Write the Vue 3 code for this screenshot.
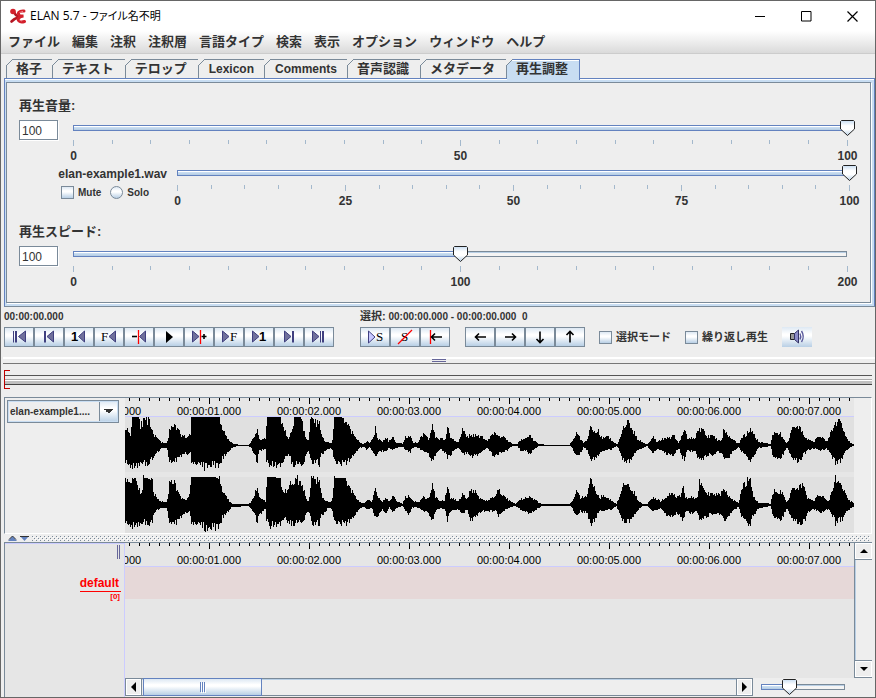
<script setup>
import { reactive, ref } from 'vue'

const menus = ['ファイル', '編集', '注釈', '注釈層', '言語タイプ', '検索', '表示', 'オプション', 'ウィンドウ', 'ヘルプ']

const tabs = [
  { name: '格子' }, { name: 'テキスト' }, { name: 'テロップ' },
  { name: 'Lexicon', latin: true }, { name: 'Comments', latin: true },
  { name: '音声認識' }, { name: 'メタデータ' }, { name: '再生調整' }
]
const activeTab = ref('再生調整')

const rows = reactive([
  { id: 'volume', title: '再生音量:', value: 100, max: 100, steps: 20, major: 10, labels: [0, 50, 100] },
  { id: 'track', file: 'elan-example1.wav', value: 100, max: 100, steps: 20, major: 5, labels: [0, 25, 50, 75, 100] },
  { id: 'rate', title: '再生スピード:', value: 100, max: 200, steps: 20, major: 10, labels: [0, 100, 200] }
])
const zoom = ref(33)
const mute = ref(false)
const solo = ref('')
const selectionMode = ref(false)
const loopMode = ref(false)
const source = ref('elan-example1....')

const triL = (tip, edge) => ({ t: 'tri', d: `M${tip} 9.5L${edge} 4V15Z` })
const triR = (edge, tip) => ({ t: 'tri', d: `M${tip} 9.5L${edge} 4V15Z` })
const bar = (x, w) => ({ t: 'bar', d: `M${x} 4h${w}v11.5h${-w}z` })
const red = (d) => ({ t: 'red', d })
const line = (d) => ({ t: 'line', d })
const glyph = (x, s, c) => ({ t: 'text', x, s, c })

const playback = [
  { name: 'Go to begin', parts: [bar(9, 1), bar(11, 2), triL(14.5, 21.5)] },
  { name: 'Previous scroll view', parts: [bar(10, 2), triL(13, 19.5)] },
  { name: 'One second back', parts: [glyph(7, '1', 'num'), triL(14.5, 20.5)] },
  { name: 'Previous frame', parts: [glyph(7, 'F', 'letter'), triL(15, 21.5)] },
  { name: 'Pixel left', parts: [line('M8 9.5h5'), red('M14.5 3v14'), triL(15.5, 21.5)] },
  { name: 'Play', parts: [{ t: 'solid', d: 'M19 10L12 4V16Z' }] },
  { name: 'Pixel right', parts: [triR(8.5, 15), red('M16.5 3v14'), line('M17.5 9.5h5M20 7v5')] },
  { name: 'Next frame', parts: [triR(8.5, 15), glyph(16, 'F', 'letter')] },
  { name: 'One second forward', parts: [triR(8.5, 15), glyph(15, '1', 'num')] },
  { name: 'Next scroll view', parts: [triR(10.5, 17), bar(18, 2)] },
  { name: 'Go to end', parts: [triR(8.5, 15), bar(16, 1), bar(18, 2)] }
]
const selectionButtons = [
  { name: 'Play selection', parts: [{ t: 'pale', d: 'M15 10L8.5 4V16Z' }, glyph(16, 'S', 'letter')] },
  { name: 'Clear selection', parts: [glyph(11, 'S', 'letter'), red('M8 17L22 3')] },
  { name: 'Toggle crosshair', parts: [red('M10.5 3v14'), line('M22 10H12M15 6.5L11.5 10L15 13.5')] }
]
const moveButtons = [
  { name: 'Previous annotation', parts: [line('M21 10H11M14 6.5L10.5 10L14 13.5')] },
  { name: 'Next annotation', parts: [line('M10 10H20M17 6.5L20.5 10L17 13.5')] },
  { name: 'Annotation below', parts: [line('M15 4.5V15M11.5 12L15 15.5L18.5 12')] },
  { name: 'Annotation above', parts: [line('M15 15.5V5M11.5 8L15 4.5L18.5 8')] }
]
const groups = [selectionButtons, moveButtons]

/* Time ruler: 100 px per second, the view starts at 0.16 s */
const ORIGIN = -16
const SIDES = 147
const seconds = Math.max(1, Math.ceil((window.innerWidth - SIDES - ORIGIN) / 100))
const ticks = Array.from({ length: seconds * 10 }, (_, i) => ({ x: ORIGIN + i * 10, major: i % 10 === 0 }))
const stamps = Array.from({ length: seconds }, (_, i) => ({ x: ORIGIN + i * 100, s: `00:00:${String(i).padStart(2, '0')}.000` }))

/* Envelope points "x,top,bottom" in thirds of a pixel */
const channels = [
  {
    center: 28,
    blocks: [
      { shift: -30, mid: 150, pts: '30,95,205 45,120,213 50,66,215 70,66,210 75,90,205 85,80,205 100,80,205 110,110,190 125,130,170 140,143,160 155,142,158 162,110,195 172,95,205 185,100,190 200,125,180 222,122,175 227,122,175 228,66,205 264,66,208 266,66,225 269,66,210 312,66,208 320,100,190 335,130,175 350,145,157 370,149,153 400,149,153 410,135,165 420,120,185 425,95,200 432,135,165 450,130,165 454,66,205 495,66,208 505,100,195 520,135,175 530,100,205 537,66,210 557,66,212 565,110,200 580,140,165 585,75,200 605,85,200 612,85,205 617,120,180 630,140,165 650,145,160 658,66,203 678,66,205 690,75,203 705,105,195 720,130,170 740,146,155 750,145,158 755,135,165 762,145,155 775,125,175 780,100,190 787,130,170 800,138,168 815,130,165 820,140,158 832,125,165 840,143,160 862,146,155 870,128,165 885,125,170 892,143,158 910,143,158 918,120,165 930,120,170 940,135,175 952,90,200 960,130,180 975,130,160 990,135,175 995,95,185 1005,125,180 1020,138,162 1030,142,158 1040,105,175 1055,125,175 1075,120,185 1100,125,170 1115,138,158' },
      { shift: 1065, mid: 149, pts: '30,125,170 42,112,185 55,125,175 65,120,172 80,135,165 95,145,152 110,146,152 120,135,165 135,130,165 150,120,178 160,135,160 175,146,153 195,148,151 268,148,150 275,135,158 290,110,182 300,130,175 310,142,155 322,130,165 328,92,190 345,110,190 352,105,180 365,130,168 380,120,165 395,135,160 410,147,152 420,125,175 430,98,195 442,80,200 455,98,190 470,130,165 485,140,158 500,148,152 510,135,165 518,120,175 530,140,160 555,125,175 570,130,175 578,115,180 595,145,158 605,120,185 613,95,190 620,128,165 645,130,170 652,100,190 662,100,195 680,125,178 700,120,180 710,135,170 725,135,175 730,100,190 745,125,185 755,130,170 775,145,155 785,125,170 800,115,185 815,100,195 822,120,175 835,140,158 870,146,152 878,115,185 895,110,190 905,125,180 920,145,155 935,100,190 952,90,198 965,110,185 980,130,165 1000,140,160 1018,120,165 1040,138,160 1050,115,175 1065,90,200 1075,68,203 1085,90,190 1095,125,170 1110,142,155 1122,148,151' }
    ]
  },
  {
    center: 88,
    blocks: [
      { shift: -30, mid: 332, pts: '30,250,388 37,265,392 50,255,395 60,250,392 78,300,388 85,250,385 110,255,388 113,290,360 125,315,345 140,322,342 155,322,342 163,265,385 178,270,388 190,300,375 205,318,360 222,305,350 228,249,388 264,249,390 268,249,405 270,249,412 272,249,398 300,249,398 314,255,388 320,290,370 340,318,350 350,328,338 400,330,335 415,310,355 425,275,380 432,310,360 450,320,345 454,249,385 464,249,385 466,249,412 468,249,388 495,250,388 502,295,370 515,290,378 525,270,385 540,250,388 555,265,388 565,290,375 580,325,350 588,260,385 598,252,390 612,265,385 620,310,360 640,325,340 650,320,345 658,250,385 690,250,388 697,275,385 712,295,370 725,318,350 745,328,336 755,315,345 770,322,342 778,280,372 790,310,360 800,320,345 812,312,355 822,322,340 832,305,352 845,322,340 862,328,335 870,308,350 880,305,360 890,320,340 912,325,340 920,308,350 935,315,350 945,300,365 952,268,382 960,310,350 975,320,340 988,320,345 995,278,378 1005,310,350 1030,320,345 1040,300,360 1055,315,345 1065,288,375 1080,290,370 1090,310,355 1110,318,350' },
      { shift: 1065, mid: 332, pts: '30,315,350 45,305,350 55,285,365 70,305,350 85,318,340 105,328,335 120,315,345 150,308,358 165,318,345 185,329,334 268,330,332 275,318,342 290,285,365 300,310,350 320,305,355 325,265,375 332,250,388 345,285,375 355,310,350 370,305,350 395,318,345 408,328,335 420,300,365 433,265,385 445,278,380 458,290,370 475,320,345 485,328,335 500,330,334 510,315,345 520,308,350 540,320,342 555,310,360 575,295,365 590,310,355 602,305,365 608,265,380 615,310,350 640,310,358 650,315,350 658,250,385 668,290,370 690,300,360 720,300,360 735,285,380 742,305,365 760,318,345 775,325,338 785,280,370 800,262,385 810,250,385 820,310,360 835,325,342 870,328,335 880,290,370 905,295,372 920,325,340 935,285,375 955,280,385 972,268,385 980,310,355 1000,320,345 1018,300,355 1045,320,345 1060,280,370 1065,255,385 1080,268,375 1088,285,375 1100,312,350 1122,328,335' }
    ]
  }
]

function wavePath({ center, blocks }) {
  const pts = blocks.flatMap(b => b.pts.split(' ').map(p => {
    const [x, top, bottom] = p.split(',').map(Number)
    return { x: (x + b.shift) / 3, up: (b.mid - top) / 3, down: (bottom - b.mid) / 3 }
  }))
  let seed = 11
  const noise = () => (seed = (seed * 16807) % 2147483647) / 2147483647
  let d = ''
  let k = 0
  for (let x = 0; x < 729; x++) {
    while (k < pts.length - 2 && pts[k + 1].x < x) k++
    const a = pts[k], b = pts[k + 1]
    const f = Math.min(1, Math.max(0, (x - a.x) / (b.x - a.x || 1)))
    const shape = (p, r) => {
      const v = a[p] + (b[p] - a[p]) * f
      return v > 26 || v < 2 ? v : v * (0.8 + 0.4 * r)
    }
    const up = Math.round(shape('up', noise()))
    const down = Math.round(shape('down', noise()))
    d += `M${x} ${center - up}h1v${up + Math.max(1, down)}h-1z`
  }
  return d
}
const waves = channels.map(wavePath)
</script>

<template>
  <div class="window">
    <header class="titlebar">
      <svg class="logo" width="17" height="17" viewBox="0 0 17 17">
        <path d="M4.500 3.500C6 7 8 8 10 9C7 10 5 11 2.500 13.500" fill="none" stroke="#b31622" stroke-width="2.600" stroke-linecap="round" />
        <path d="M15 3C10 2.500 8 5.500 10.500 7.500C12 8.500 14 8 14.500 8C10 8.500 8 11 10 13C11.500 14.500 14 14 15.500 13.500" fill="none" stroke="#d3202c" stroke-width="3" stroke-linecap="round" />
        <circle cx="4" cy="3.500" r="2.800" fill="#d3202c" />
        <path d="M10.500 4.500L14 3.500M10.500 12L13 13" stroke="#f08a90" />
      </svg>
      <h1>ELAN 5.7 - <span>ファイル名不明</span></h1>
      <div class="controls">
        <button aria-label="Minimize"><svg width="11" height="11"><path d="M0 5.500h10" stroke="#000" /></svg></button>
        <button aria-label="Maximize"><svg width="11" height="11"><path d="M.5 .5h9.500v9.500H.5z" fill="none" stroke="#000" /></svg></button>
        <button aria-label="Close"><svg width="11" height="11"><path d="M.5 .5l10 10M10.500 .5l-10 10" stroke="#000" stroke-width="1.200" /></svg></button>
      </div>
    </header>

    <nav class="menubar">
      <button v-for="m in menus" :key="m">{{ m }}</button>
    </nav>

    <div class="tabs" role="tablist">
      <button
        v-for="t in tabs" :key="t.name" role="tab"
        :class="['tab', { latin: t.latin, active: t.name === activeTab }]"
        :aria-selected="t.name === activeTab" @click="activeTab = t.name"
      >{{ t.name }}</button>
    </div>

    <section class="panel">
      <div class="panel-body">
        <div v-for="r in rows" :key="r.id" :class="['setting', r.id]">
          <label v-if="r.title" class="setting-title" :for="r.id">{{ r.title }}</label>
          <div class="setting-row">
            <input v-if="r.title" :id="r.id" v-model="r.value" class="number" type="text">
            <div v-else class="track-info">
              <label class="file" for="track-range">{{ r.file }}</label>
              <div class="options">
                <label><input v-model="mute" class="box" type="checkbox">Mute</label>
                <label><input v-model="solo" class="box round" type="radio" value="solo">Solo</label>
              </div>
            </div>
            <div class="slider">
              <div class="groove">
                <div class="rail"><div class="fill" :style="{ width: r.value / r.max * 100 + '%' }"></div></div>
                <svg class="knob" :style="{ left: r.value / r.max * 100 + '%' }" width="15" height="16" viewBox="0 0 15 16">
                  <path d="M1.500 .5H13.500L14.500 1.500V9L7.500 15.500L.5 9V1.500Z" fill="url(#knobFill)" stroke="#222" />
                </svg>
                <input :id="r.id + '-range'" v-model.number="r.value" class="range" type="range" min="0" :max="r.max" :aria-label="r.title || r.file">
              </div>
              <div class="scale">
                <i v-for="n in r.steps + 1" :key="n" :class="{ major: (n - 1) % r.major === 0 }"></i>
              </div>
              <div class="scale-labels">
                <span v-for="l in r.labels" :key="l"><b>{{ l }}</b></span>
              </div>
            </div>
          </div>
        </div>
      </div>
    </section>

    <section class="transport">
      <div class="transport-col">
        <div class="status">00:00:00.000</div>
        <div class="buttons">
          <button v-for="b in playback" :key="b.name" class="tool" :aria-label="b.name">
            <svg width="28" height="18" viewBox="1 1 28 18">
              <template v-for="(p, i) in b.parts" :key="i">
                <text v-if="p.t === 'text'" :x="p.x" y="14" :class="p.c">{{ p.s }}</text>
                <path v-else :d="p.d" :class="'p-' + p.t" />
              </template>
            </svg>
          </button>
        </div>
      </div>
      <div class="transport-col">
        <div class="status"><span>選択:</span> 00:00:00.000 - 00:00:00.000 &nbsp;0</div>
        <div class="tool-row">
          <div v-for="(g, gi) in groups" :key="gi" class="buttons">
            <button v-for="b in g" :key="b.name" class="tool" :aria-label="b.name">
              <svg width="28" height="18" viewBox="1 1 28 18">
                <template v-for="(p, i) in b.parts" :key="i">
                  <text v-if="p.t === 'text'" :x="p.x" y="14" :class="p.c">{{ p.s }}</text>
                  <path v-else :d="p.d" :class="'p-' + p.t" />
                </template>
              </svg>
            </button>
          </div>
          <label class="mode"><input v-model="selectionMode" class="box" type="checkbox">選択モード</label>
          <label class="mode"><input v-model="loopMode" class="box" type="checkbox">繰り返し再生</label>
          <button class="tool flat" aria-label="Volume">
            <svg width="30" height="20" viewBox="0 0 30 20">
              <path d="M8.500 6.500h4v6h-4z" fill="#999" stroke="#222" />
              <path d="M12.500 6.500L16.500 3V16L12.500 12.500Z" fill="#8c8cc8" stroke="#333366" />
              <path d="M18 6.500Q19.500 9.500 18 12.500M19.500 4Q23 9.500 19.500 15" fill="none" stroke="#5a5a9c" stroke-width="1.400" />
            </svg>
          </button>
        </div>
      </div>
    </section>

    <div class="splitter"><i></i></div>
    <div class="overview"><div class="lines"></div><i class="bracket"></i></div>

    <section class="signal">
      <div class="signal-side">
        <select v-model="source" class="combo" aria-label="Signal source"><option>elan-example1....</option></select>
      </div>
      <div class="signal-view">
        <svg class="ruler" width="100%" height="18">
          <path v-for="t in ticks" :key="t.x" :d="`M${t.x + 0.5} 0v${t.major ? 6 : 3}`" />
          <text v-for="s in stamps" :key="s.s" :x="s.x" y="17">{{ s.s }}</text>
        </svg>
        <svg class="wave" width="100%" height="116" viewBox="0 0 729 116" preserveAspectRatio="none">
          <rect y="55" width="729" height="5" fill="#e6e6e6" />
          <path v-for="(w, i) in waves" :key="i" :d="w" />
        </svg>
      </div>
      <div class="signal-end"></div>
    </section>

    <div class="divider">
      <button aria-label="Collapse up"><svg width="9" height="5"><path d="M0 5L4.500 0L9 5Z" fill="#6382bf" /><path d="M1 3.500L4.500 0L8 3.500" fill="none" stroke="#333" /></svg></button>
      <button aria-label="Collapse down"><svg width="9" height="5"><path d="M0 0L4.500 5L9 0Z" fill="#6382bf" /><path d="M0 .5h9" stroke="#333" /></svg></button>
      <svg class="dots" height="5" aria-hidden="true">
        <defs><pattern id="bumps" width="4" height="4" patternUnits="userSpaceOnUse">
          <rect width="1" height="1" fill="#7a8a99" /><rect x="2" y="2" width="1" height="1" fill="#7a8a99" />
          <rect x="1" y="1" width="1" height="1" fill="#fff" /><rect x="3" y="3" width="1" height="1" fill="#fff" />
        </pattern></defs>
        <rect width="100%" height="5" fill="url(#bumps)" />
      </svg>
    </div>

    <section class="timeline">
      <aside class="tiers">
        <div class="grip"><i></i></div>
        <div class="tier"><a href="#default">default</a><small>[0]</small></div>
      </aside>
      <div class="timeline-main">
        <div class="timeline-top">
          <div class="canvas">
            <svg class="ruler" width="100%" height="23">
              <path v-for="t in ticks" :key="t.x" :d="`M${t.x + 0.5} 0v${t.major ? 6 : 3}`" />
              <text v-for="s in stamps" :key="s.s" :x="s.x" y="21">{{ s.s }}</text>
            </svg>
            <div class="band"></div>
          </div>
          <div class="vscroll">
            <button aria-label="Scroll up"><svg width="8" height="4"><path d="M0 4L4 0L8 4Z" /></svg></button>
            <button aria-label="Scroll down"><svg width="8" height="4"><path d="M0 0L4 4L8 0Z" /></svg></button>
          </div>
        </div>
        <div class="timeline-bottom">
          <div class="hscroll">
            <button aria-label="Scroll left"><svg width="5" height="10"><path d="M5 0L0 5L5 10Z" /></svg></button>
            <div class="lane"><div class="thumb"><i></i><i></i><i></i></div></div>
            <button aria-label="Scroll right"><svg width="5" height="10"><path d="M0 0L5 5L0 10Z" /></svg></button>
          </div>
          <div class="zoom">
            <div class="groove">
              <div class="rail"><div class="fill" :style="{ width: zoom + '%' }"></div></div>
              <svg class="knob" :style="{ left: zoom + '%' }" width="15" height="16" viewBox="0 0 15 16">
                <defs><linearGradient id="knobFill" x2="0" y2="1">
                  <stop offset="0" stop-color="#c8ddf2" /><stop offset=".35" stop-color="#fff" />
                  <stop offset=".6" stop-color="#fff" /><stop offset="1" stop-color="#b8cfe5" />
                </linearGradient></defs>
                <path d="M1.500 .5H13.500L14.500 1.500V9L7.500 15.500L.5 9V1.500Z" fill="url(#knobFill)" stroke="#222" />
              </svg>
              <input v-model.number="zoom" class="range" type="range" min="0" max="100" aria-label="Zoom">
            </div>
          </div>
        </div>
      </div>
    </section>
  </div>
</template>

<style>
body { margin: 0; }
</style>

<style scoped>
* { box-sizing: border-box; }
.window {
  --edge: #7a8a99;
  --blue: #6382bf;
  --soft: #c8ddf2;
  --face: #eeeeee;
  --steel: linear-gradient(#dde8f3, #fff 35%, #fff 45%, #b8cfe5);
  display: flex;
  flex-direction: column;
  min-height: 100vh;
  border: 1px solid #666;
  background: var(--face);
  color: #333;
  font: bold 12px/16px "Liberation Sans", "Noto Sans CJK JP", sans-serif;
  white-space: nowrap;
}
button { padding: 0; border: 0; background: none; color: inherit; font: inherit; }
svg { display: block; }

.titlebar { display: flex; align-items: center; height: 30px; padding-left: 8px; background: #fff; }
.titlebar h1 {
  flex: 1; margin: 0 0 0 4px; color: #000;
  font: 12px/16px "Open Sans", "Noto Sans CJK JP", sans-serif;
}
.titlebar span { font-size: 11px; font-feature-settings: "palt"; }
.controls { display: flex; }
.controls button { display: grid; place-items: center; width: 46px; height: 28px; }

.menubar {
  display: flex; gap: 12px; height: 23px; padding-left: 7px;
  border-bottom: 1px solid #ccc; background: linear-gradient(#fff, #dadada);
  font-size: 13px;
}
.menubar button { line-height: 20px; }

.tabs { display: flex; margin: 5px 0 0 5px; position: relative; }
.tab {
  position: relative; height: 19px; padding: 0 11px 0 9px;
  border: solid var(--edge); border-width: 1px 1px 0 0;
  background: var(--face); font-size: 13px; line-height: 18px;
}
.tab:first-child { padding-right: 10px; border-left-width: 1px; }
.tab.latin { padding: 0 10px; font-size: 12px; }
.tab::before {
  content: ""; position: absolute; left: -1px; top: -1px; width: 7px; height: 7px;
  background: linear-gradient(135deg, var(--face) 0 45%, var(--edge) 45% 55%, transparent 55%);
}
.tab.active { height: 21px; margin-bottom: -2px; padding-bottom: 2px; border-color: var(--blue); background: var(--soft); box-shadow: inset 0 1px #fff; }

.panel {
  margin: 0 0 0 3px; border: 1px solid var(--blue); border-bottom-color: var(--edge);
  padding: 3px 3px 3px 1px; background: linear-gradient(#fff 0 1px, var(--soft) 1px);
}
.panel-body { padding: 13px 0 11px; border: 1px solid var(--edge); background: var(--face); box-shadow: 1px 1px #fff; }
.setting-title { display: block; margin: 0 0 4px 12px; font-size: 13px; line-height: 20px; }
.setting.rate { margin-top: 12px; }
.setting-row { display: flex; height: 45px; padding: 0 22px 0 12px; }
.track .setting-row { padding-right: 20px; }
.number {
  width: 39px; height: 20px; margin-right: 15px; padding: 1px 2px 0;
  border: 1px solid var(--edge); background: #fff; box-shadow: 1px 1px #fff;
  color: #333; font: 12px/16px "Liberation Sans", sans-serif;
}
.track-info { width: 148px; margin-right: 10px; text-align: right; }
.file { display: block; line-height: 18px; }
.options { display: flex; gap: 9px; margin: 3px 0 0 42px; font-size: 10px; line-height: 13px; }
.options label, .mode { display: flex; align-items: center; gap: 4px; }
.box { appearance: none; width: 13px; height: 13px; margin: 0; border: 1px solid var(--edge); background: var(--steel); }
.box:checked { background: var(--blue); }
.round { border-radius: 50%; }

.slider { flex: 1; }
.groove { position: relative; height: 16px; margin-right: 1px; padding-top: 5px; }
.rail { height: 6px; border: 1px solid var(--edge); background: linear-gradient(#b8cfe5 0 1px, #f4f4f4 1px); }
.fill { height: 6px; margin: -1px; border: 1px solid var(--blue); box-sizing: content-box; height: 4px; background: linear-gradient(#fff 0 1px, var(--soft) 1px 2px, #b8cfe5 3px); }
.knob { position: absolute; top: 0; margin-left: -7px; }
.range { position: absolute; inset: 0; width: 100%; height: 100%; margin: 0; opacity: 0; }
.scale { display: flex; justify-content: space-between; height: 6px; margin-top: 4px; }
.scale i { width: 1px; height: 4px; background: #a3b8cc; }
.scale i.major { height: 6px; }
.scale-labels { display: flex; justify-content: space-between; margin-top: 2px; }
.scale-labels span { display: flex; justify-content: center; width: 1px; }

.transport { display: flex; gap: 26px; padding: 3px 0 10px 3px; }
.status { height: 17px; font-size: 10px; line-height: 13px; }
.status span { font-size: 11px; }
.buttons, .tool-row { display: flex; }
.tool-row .buttons { margin-right: 15px; }
.tool-row .buttons + .buttons { margin-right: 14px; }
.tool { width: 30px; height: 20px; border: 1px solid var(--edge); background: var(--steel); }
.tool.flat { border: 0; }
.mode { margin-right: 14px; font-size: 11px; }
.p-tri { fill: #70709c; stroke: #404080; }
.p-bar { fill: #404080; }
.p-solid { fill: #000; }
.p-pale { fill: #c8c8ff; stroke: #404080; }
.p-red { fill: none; stroke: #f00; stroke-width: 1.3; }
.p-line { fill: none; stroke: #000; stroke-width: 1.6; }
.num { fill: #000; font: bold 13px "Liberation Sans", sans-serif; }
.letter { fill: #000; font: 13px "Liberation Serif", serif; }

.splitter { height: 7px; margin-left: 2px; border-top: 2px solid #fff; border-bottom: 1px solid #777; }
.splitter i { display: block; width: 14px; height: 3px; margin: 0 auto; border: solid #666699; border-width: 1px 0; }
.overview { position: relative; height: 33px; padding: 11px 3px 0 4px; }
.lines { height: 10px; background: linear-gradient(#555 0 1px, #eee 1px 4px, #aaa 4px 5px, #fff 5px 6px, #c0c0c0 6px 9px, #444 9px); }
.bracket { position: absolute; left: 3px; top: 6px; width: 6px; height: 19px; border: 1px solid #c00000; border-right: 0; }

.signal { display: flex; margin: 0 3px; border: 1px solid #fff; border-top-color: var(--edge); border-left-color: var(--edge); }
.signal-side { width: 120px; padding: 2px; }
.combo {
  appearance: none; display: block; width: 112px; height: 23px; padding: 0 2px;
  border: 1px solid var(--edge); border-radius: 0; color: #333;
  font: bold 10px/21px "Liberation Sans", sans-serif;
  background:
    linear-gradient(to bottom left, #333 50%, transparent 50%) 96px 8px / 5px 5px no-repeat,
    linear-gradient(to bottom right, #333 50%, transparent 50%) 101px 8px / 5px 5px no-repeat,
    linear-gradient(var(--edge), var(--edge)) 91px 0 / 1px 100% no-repeat,
    linear-gradient(#dde8f3, #fff 35%, #fff 45%, #b8cfe5) 92px 0 / 18px 100% no-repeat,
    var(--face);
  box-shadow: inset 0 0 0 1px var(--soft);
}
.signal-view { flex: 1; min-width: 0; }
.ruler { box-sizing: content-box; overflow: hidden; border-bottom: 1px solid #ccccff; background: #e6e6e6; }
.ruler path { stroke: #000; }
.ruler text { fill: #000; font: 11px "Liberation Sans", sans-serif; text-anchor: middle; }
.wave { background: #e0e0e0; shape-rendering: crispEdges; }
.signal-end { width: 17px; }

.divider { display: flex; align-items: center; gap: 3px; height: 8px; margin: 0 5px 0 7px; }
.dots { flex: 1; }

.timeline { display: flex; flex: 1; margin: 0 3px; border: solid var(--edge); border-width: 1px 0 0 1px; }
.tiers { width: 120px; border-top: 1px solid #ccccff; border-right: 1px solid #ccccff; background: #e6e6e6; }
.grip { display: flex; justify-content: flex-end; height: 16px; padding: 1px 4px 0 0; }
.grip i { width: 3px; height: 14px; border: solid #666699; border-width: 0 1px; }
.tier { display: flex; flex-direction: column; align-items: flex-end; padding: 16px 3px 0 0; color: #f00; }
.tier a { padding-right: 2px; border-bottom: 1px solid #f00; color: inherit; line-height: 15px; text-decoration: none; }
.tier small { padding-right: 1px; font-size: 8px; line-height: 10px; }
.timeline-main { display: flex; flex: 1; flex-direction: column; min-width: 0; }
.timeline-top { display: flex; flex: 1; }
.canvas { flex: 1; min-width: 0; background: #e6e6e6; }
.band { height: 32px; background: #e6d8d8; }
.vscroll { display: flex; flex-direction: column; justify-content: space-between; width: 18px; border: solid var(--edge); border-width: 0 0 1px 1px; box-shadow: inset 1px 0 #b8cfe5; }
.vscroll button { display: grid; place-items: center; height: 16px; border: 1px solid #fff; background: var(--face); box-shadow: 0 1px var(--edge); }
.vscroll button:last-child { box-shadow: 0 -1px var(--edge); }
.timeline-bottom { display: flex; height: 19px; }
.hscroll { display: flex; flex: 1; height: 18px; border: 1px solid var(--edge); box-shadow: inset 0 1px #b8cfe5; }
.hscroll button { display: grid; place-items: center; width: 15px; border: 1px solid #fff; background: var(--face); }
.lane { flex: 1; padding-left: 1px; border: solid var(--edge); border-width: 0 1px; }
.thumb { display: flex; justify-content: center; align-items: center; gap: 1px; width: 20%; height: 18px; margin-top: -1px; border: 1px solid var(--blue); background: var(--steel); }
.thumb i { width: 1px; height: 10px; background: var(--blue); box-shadow: 1px 1px #fff; }
.zoom { width: 119px; padding: 1px 26px 0 8px; }
</style>
